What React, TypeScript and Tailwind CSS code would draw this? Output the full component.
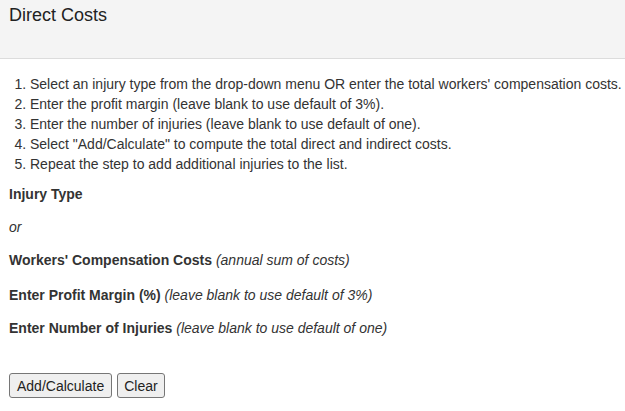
import React from 'react';

const STEPS = [
  "Select an injury type from the drop-down menu OR enter the total workers' compensation costs.",
  'Enter the profit margin (leave blank to use default of 3%).',
  'Enter the number of injuries (leave blank to use default of one).',
  'Select "Add/Calculate" to compute the total direct and indirect costs.',
  'Repeat the step to add additional injuries to the list.',
];

export default function App() {
  return (
    <div className="min-h-screen bg-white text-[#333] font-['Liberation_Sans',Arial,sans-serif] text-[14px] leading-[20px]">
      {/* Panel heading */}
      <div className="h-[59px] bg-[#f4f4f4] border-b border-[#dcdcdc] px-[9px] pt-[4px]">
        <h2 className="text-[18px] leading-[22px] font-normal text-[#222]">Direct Costs</h2>
      </div>

      <div className="pl-[9px] pt-[15px]">
        {/* Instructions */}
        <ol className="list-decimal pl-[21px] whitespace-nowrap">
          {STEPS.map((step, i) => (
            <li key={i}>{step}</li>
          ))}
        </ol>

        {/* Form labels */}
        <div className="flex flex-col gap-[13px] mt-[10px]">
          <div className="font-bold">Injury Type</div>
          <div className="italic">or</div>
          <div>
            <span className="font-bold">Workers' Compensation Costs</span>{' '}
            <span className="italic">(annual sum of costs)</span>
          </div>
          <div className="mt-[2px]">
            <span className="font-bold">Enter Profit Margin (%)</span>{' '}
            <span className="italic">(leave blank to use default of 3%)</span>
          </div>
          <div>
            <span className="font-bold">Enter Number of Injuries</span>{' '}
            <span className="italic">(leave blank to use default of one)</span>
          </div>
        </div>

        {/* Actions */}
        <div className="flex gap-[5px] mt-[35px]">
          <button className="h-[25px] px-[7px] bg-[#efefef] border border-[#767676] rounded-[3px] text-[14px] leading-[20px] text-[#222]">
            Add/Calculate
          </button>
          <button className="h-[25px] px-[6px] bg-[#efefef] border border-[#767676] rounded-[3px] text-[14px] leading-[20px] text-[#222]">
            Clear
          </button>
        </div>
      </div>
    </div>
  );
}
